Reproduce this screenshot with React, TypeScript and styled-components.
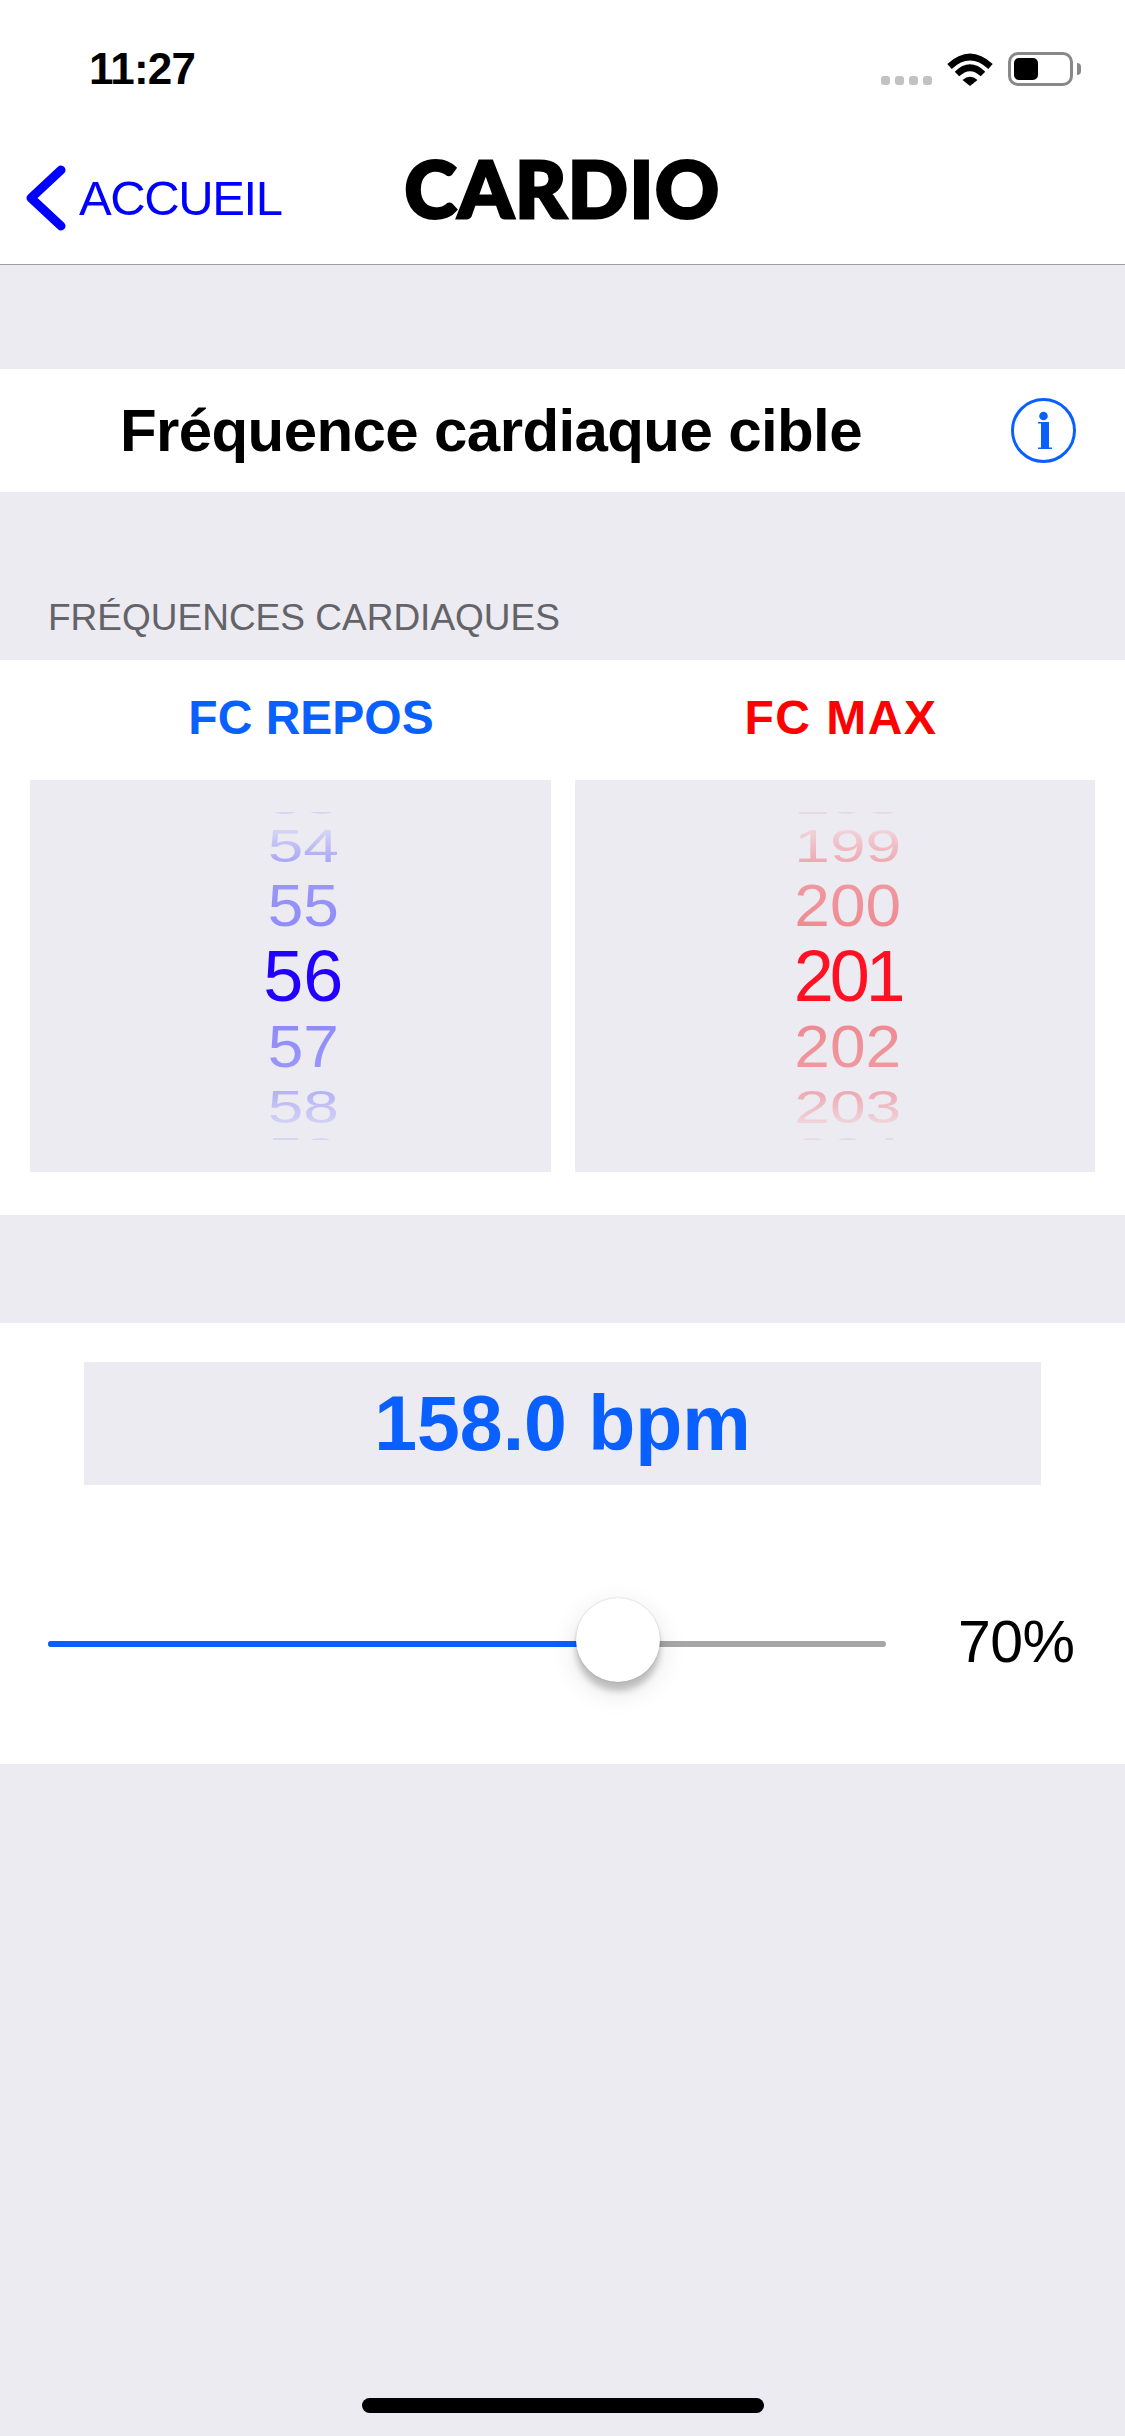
import React from 'react'
import styled, { createGlobalStyle } from 'styled-components'

const BLUE = '#0a60ff'

const PERCENT = 70

interface Tone {
    top: string
    bottom: string
}

const blueTones: Tone[] = [
    { top: '#e2e2f3', bottom: '#d6d6f4' },
    { top: '#d6d5f5', bottom: '#a9a6f6' },
    { top: '#9a96f9', bottom: '#8f8bfa' },
    { top: '#2200ff', bottom: '#2200ff' },
    { top: '#8f8bfa', bottom: '#9a96f9' },
    { top: '#b4b2f4', bottom: '#d3d1f4' },
    { top: '#d6d6f4', bottom: '#e2e2f3' },
]

const redTones: Tone[] = [
    { top: '#e8e4ec', bottom: '#e6d8e0' },
    { top: '#f0d4da', bottom: '#f0a8b0' },
    { top: '#f0989e', bottom: '#f08a92' },
    { top: '#ff1023', bottom: '#ff1023' },
    { top: '#f08a92', bottom: '#f0989e' },
    { top: '#eda8b0', bottom: '#f0d4da' },
    { top: '#e6d8e0', bottom: '#e8e4ec' },
]

// height of the row, font size and squash for each slot of the drum
const slots = [
    { height: 40, size: 64, squash: 0.58 },
    { height: 49, size: 64, squash: 0.72 },
    { height: 71, size: 64, squash: 0.93 },
    { height: 70, size: 72, squash: 1 },
    { height: 71, size: 64, squash: 0.93 },
    { height: 49, size: 64, squash: 0.72 },
    { height: 40, size: 64, squash: 0.58 },
]

function Wheel({ center, tones, tracking = 0 }: { center: number; tones: Tone[]; tracking?: number }) {
    return (
        <Picker>
            <Drum>
                {slots.map((slot, i) => (
                    <DrumRow key={i} $height={slot.height}>
                        <DrumValue
                            $size={slot.size}
                            $squash={slot.squash}
                            $top={tones[i].top}
                            $bottom={tones[i].bottom}
                            $tracking={i === 3 ? tracking : 0}
                        >
                            {center + i - 3}
                        </DrumValue>
                    </DrumRow>
                ))}
            </Drum>
        </Picker>
    )
}

export default function App() {
    return (
        <Page>
            <GlobalStyle />

            <StatusBar>
                <Time>11:27</Time>
                <StatusIcons>
                    <Signal>
                        <SignalDot />
                        <SignalDot />
                        <SignalDot />
                        <SignalDot />
                    </Signal>
                    <WifiIcon viewBox="0 0 46 34" width="46" height="34">
                        <path d="M2.5 14.5 Q23 -4.5 43.5 14.5" fill="none" stroke="#000" strokeWidth="6.5" />
                        <path d="M10 22 Q23 9.5 36 22" fill="none" stroke="#000" strokeWidth="6.5" />
                        <path d="M15.5 28 Q23 21.5 30.5 28 L23 34 Z" fill="#000" />
                    </WifiIcon>
                    <Battery>
                        <BatteryLevel />
                    </Battery>
                </StatusIcons>
            </StatusBar>

            <NavBar>
                <BackLink>
                    <svg viewBox="0 0 42 66" width="42" height="66">
                        <path d="M37 5 L7 33 L37 61" fill="none" stroke="#0000ff" strokeWidth="9" strokeLinecap="round" strokeLinejoin="round" />
                    </svg>
                    <BackText>ACCUEIL</BackText>
                </BackLink>
                <NavTitle>CARDIO</NavTitle>
            </NavBar>

            <TitleRow>
                <RowTitle>Fréquence cardiaque cible</RowTitle>
                <svg viewBox="0 0 65 65" width="65" height="65">
                    <circle cx="32.5" cy="32.5" r="31" fill="none" stroke={BLUE} strokeWidth="3" />
                    <circle cx="32.5" cy="18" r="4.3" fill={BLUE} />
                    <path d="M27 24 H38 V49.5 H41 V51 H27 V49.5 H30 V25.5 H27 Z" fill={BLUE} />
                </svg>
            </TitleRow>

            <SectionLabel>FRÉQUENCES CARDIAQUES</SectionLabel>

            <PickerCard>
                <PickerHeads>
                    <PickerHead $color={BLUE}>FC REPOS</PickerHead>
                    <PickerHead $color="#ff0000" $tracking={1.5}>FC MAX</PickerHead>
                </PickerHeads>
                <PickerColumns>
                    <Wheel center={56} tones={blueTones} />
                    <Wheel center={201} tones={redTones} tracking={-4} />
                </PickerColumns>
            </PickerCard>

            <ResultCard>
                <ResultBox>158.0 bpm</ResultBox>
                <SliderRow>
                    <Track>
                        <TrackFill style={{ width: 42 + (754 * PERCENT) / 100 }} />
                        <Thumb style={{ left: (754 * PERCENT) / 100 }} />
                    </Track>
                    <Percent>{PERCENT}%</Percent>
                </SliderRow>
            </ResultCard>

            <HomeIndicator />
        </Page>
    )
}

const GlobalStyle = createGlobalStyle`
    html, body {
        margin: 0;
        padding: 0;
        background: #ebebf1;
    }
`

const Page = styled.div`
    display: flex;
    flex-direction: column;
    width: 1125px;
    height: 2436px;
    overflow: hidden;
    background: #ebebf1;
    font-family: "Liberation Sans", Arial, sans-serif;
`

const StatusBar = styled.div`
    display: flex;
    justify-content: space-between;
    align-items: flex-start;
    height: 132px;
    padding: 52px 52px 0 89px;
    box-sizing: border-box;
    background: white;
`

const Time = styled.div`
    font-size: 44px;
    font-weight: 700;
    line-height: 34px;
    letter-spacing: -0.8px;
    color: black;
`

const StatusIcons = styled.div`
    display: flex;
    align-items: flex-start;
    gap: 15px;
`

const Signal = styled.div`
    display: flex;
    gap: 5px;
    margin-top: 24px;
`

const SignalDot = styled.span`
    width: 9px;
    height: 9px;
    border-radius: 3px;
    background: #c2c2c2;
`

const WifiIcon = styled.svg`
    display: block;
`

const Battery = styled.div`
    position: relative;
    width: 65px;
    height: 34px;
    box-sizing: border-box;
    padding: 3px;
    border: 3px solid #888;
    border-radius: 10px;

    &::after {
        content: "";
        position: absolute;
        top: 8px;
        right: -11px;
        width: 4px;
        height: 12px;
        border-radius: 0 6px 6px 0;
        background: #888;
    }
`

const BatteryLevel = styled.div`
    width: 24px;
    height: 100%;
    border-radius: 5px;
    background: black;
`

const NavBar = styled.div`
    display: grid;
    grid-template-columns: 1fr auto 1fr;
    align-items: center;
    height: 133px;
    box-sizing: border-box;
    border-bottom: 1px solid #a0a0a4;
    background: white;
`

const BackLink = styled.div`
    display: flex;
    align-items: center;
    gap: 13px;
    padding-left: 24px;
`

const BackText = styled.span`
    font-size: 49px;
    letter-spacing: -1.4px;
    color: #0000ff;
`

const NavTitle = styled.div`
    padding-bottom: 22px;
    font-family: Lato, "Liberation Sans", sans-serif;
    font-size: 79px;
    font-weight: 900;
    line-height: 1;
    letter-spacing: 1.5px;
    -webkit-text-stroke: 3px black;
    color: black;
`

const TitleRow = styled.div`
    display: flex;
    justify-content: space-between;
    align-items: center;
    height: 123px;
    margin-top: 104px;
    padding: 0 49px 0 120px;
    box-sizing: border-box;
    background: white;
`

const RowTitle = styled.div`
    font-size: 60px;
    font-weight: 700;
    letter-spacing: -0.6px;
    color: black;
`

const SectionLabel = styled.div`
    height: 168px;
    padding: 0 0 21px 48px;
    box-sizing: border-box;
    display: flex;
    align-items: flex-end;
    font-size: 37px;
    line-height: 42px;
    color: #636368;
`

const PickerCard = styled.div`
    height: 555px;
    padding: 0 30px;
    box-sizing: border-box;
    background: white;
`

const PickerHeads = styled.div`
    display: grid;
    grid-template-columns: 530px 530px;
    height: 120px;
    align-items: center;
    padding: 0 0 6px 16px;
    box-sizing: border-box;
`

const PickerHead = styled.div<{ $color: string; $tracking?: number }>`
    font-size: 48px;
    font-weight: 700;
    text-align: center;
    letter-spacing: ${(p) => p.$tracking ?? 0}px;
    color: ${(p) => p.$color};
`

const PickerColumns = styled.div`
    display: flex;
    gap: 24px;
`

const Picker = styled.div`
    display: flex;
    justify-content: center;
    width: 521px;
    height: 392px;
    padding: 32px 0 32px 26px;
    box-sizing: border-box;
    background: #ebebf1;
`

const Drum = styled.div`
    display: flex;
    flex-direction: column;
    justify-content: center;
    align-items: center;
    height: 328px;
    width: 200px;
    overflow: hidden;
`

const DrumRow = styled.div<{ $height: number }>`
    display: flex;
    flex-shrink: 0;
    align-items: center;
    justify-content: center;
    height: ${(p) => p.$height}px;
`

const DrumValue = styled.span<{ $size: number; $squash: number; $top: string; $bottom: string; $tracking: number }>`
    display: inline-block;
    font-size: ${(p) => p.$size}px;
    line-height: 1;
    letter-spacing: ${(p) => p.$tracking}px;
    transform: scaleY(${(p) => p.$squash});
    background: linear-gradient(${(p) => p.$top} 15%, ${(p) => p.$bottom} 85%);
    -webkit-background-clip: text;
    background-clip: text;
    color: transparent;
`

const ResultCard = styled.div`
    display: flex;
    flex-direction: column;
    height: 441px;
    margin-top: 108px;
    padding: 39px 0 0;
    box-sizing: border-box;
    background: white;
`

const ResultBox = styled.div`
    display: flex;
    justify-content: center;
    align-items: center;
    width: 957px;
    height: 123px;
    margin-left: 84px;
    font-size: 77px;
    font-weight: 700;
    color: ${BLUE};
    background: #ebebf1;
`

const SliderRow = styled.div`
    display: flex;
    align-items: center;
    height: 6px;
    margin-top: 156px;
    padding-left: 48px;
`

const Track = styled.div`
    position: relative;
    width: 838px;
    height: 6px;
    border-radius: 3px;
    background: #a6a6a6;
`

const TrackFill = styled.div`
    height: 100%;
    border-radius: 3px 0 0 3px;
    background: ${BLUE};
`

const Thumb = styled.div`
    position: absolute;
    top: -43px;
    width: 84px;
    height: 84px;
    border-radius: 50%;
    background: white;
    box-shadow: 0 0 2px rgba(0, 0, 0, 0.2), 0 9px 6px rgba(0, 0, 0, 0.2), 0 9px 28px rgba(0, 0, 0, 0.12);
`

const Percent = styled.div`
    margin: -4px 0 0 72px;
    font-size: 59px;
    letter-spacing: -0.6px;
    color: black;
`

const HomeIndicator = styled.div`
    align-self: center;
    width: 402px;
    height: 15px;
    margin-top: auto;
    margin-bottom: 23px;
    border-radius: 8px;
    background: black;
`
